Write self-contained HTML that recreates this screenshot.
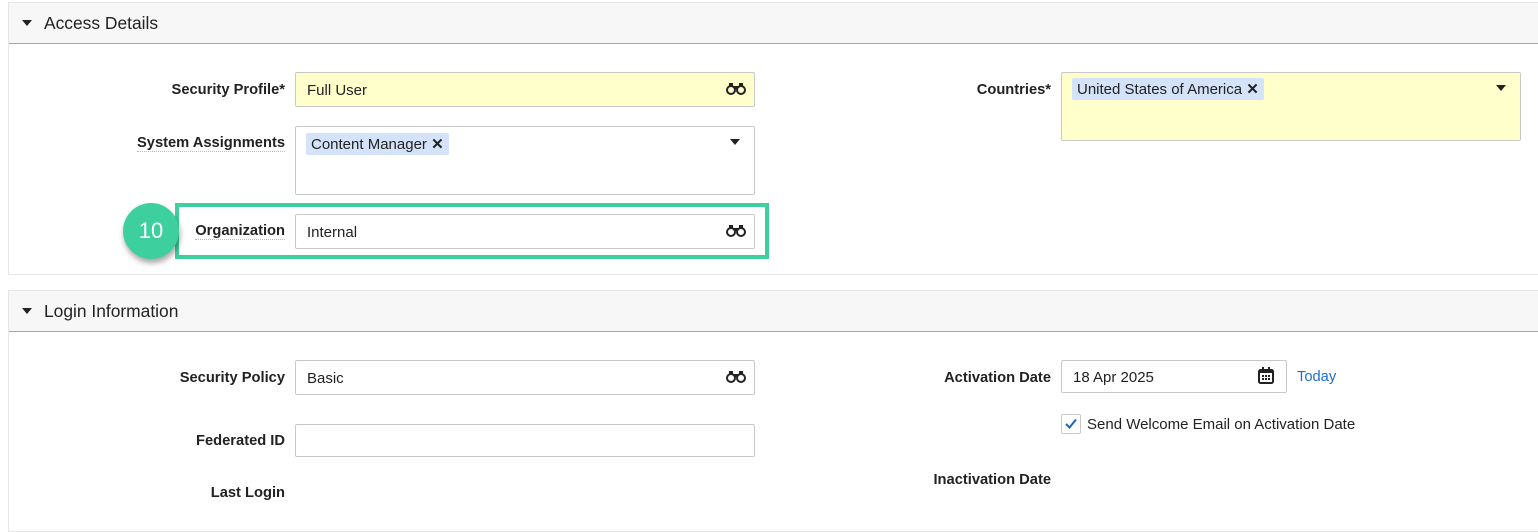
<!DOCTYPE html>
<html><head><style>
body{margin:0;width:1538px;height:520px;overflow:hidden;background:#fff;font-family:"Liberation Sans",Arial,sans-serif;color:#222;position:relative}
.a{position:absolute}
.panel{position:absolute;left:8px;right:-10px;border:1px solid #e6e6e6;background:#fff}
.hdr{position:absolute;left:0;right:0;top:0;height:40px;background:#f7f7f7;border-bottom:1px solid #e8963a}
.tri{position:absolute;left:13px;top:17px;width:0;height:0;border-left:5px solid transparent;border-right:5px solid transparent;border-top:6px solid #222}
.ttl{position:absolute;left:35px;top:10px;font-size:17.4px;color:#222}
.lbl{position:absolute;font-weight:bold;font-size:14.7px;text-align:right;color:#222}
.inp{position:absolute;border:1px solid #c8c8c8;border-radius:2px;background:#fff;font-size:15px;box-sizing:border-box}
.y{background:#ffffcc}
.chip{position:absolute;background:#d4e3fa;border-radius:2px;font-size:15px;padding:2px 5px;height:22px;box-sizing:border-box}
.dd{position:absolute;width:0;height:0;border-left:5px solid transparent;border-right:5px solid transparent;border-top:6px solid #222}
</style></head><body>
<div class="panel" style="top:2px;height:271px">
 <div class="hdr"><div class="tri"></div><div class="ttl">Access Details</div></div>
</div>
<div class="lbl" style="right:1253px;top:82px">Security Profile*</div>
<div class="inp y" style="left:295px;top:72px;width:460px;height:35px;padding:9px 11px">Full User</div>
<svg class="a" style="left:726px;top:83px" width="20" height="12" viewBox="0 0 20 12"><circle cx="5" cy="7" r="4" fill="none" stroke="#222" stroke-width="2"/><circle cx="15" cy="7" r="4" fill="none" stroke="#222" stroke-width="2"/><rect x="3" y="0" width="4" height="4" fill="#222"/><rect x="13" y="0" width="4" height="4" fill="#222"/><rect x="8" y="3" width="4" height="3" fill="#222"/></svg>
<div class="lbl" style="right:1253px;top:135px;border-bottom:1px dotted #bbb">System Assignments</div>
<div class="inp" style="left:295px;top:126px;width:460px;height:69px"></div>
<div class="chip" style="left:306px;top:133px">Content Manager <b>✕</b></div>
<div class="dd" style="left:730px;top:139px"></div>
<div class="a" style="left:175px;top:203px;width:586px;height:48px;border:4px solid #3ecf9e"></div>
<div class="a" style="left:123px;top:203px;width:56px;height:56px;border-radius:50%;background:#3ecf9e;box-shadow:1px 4px 6px rgba(0,0,0,.35);color:#fff;font-size:22px;text-align:center;line-height:56px">10</div>
<div class="lbl" style="right:1253px;top:223px;border-bottom:1px dotted #bbb">Organization</div>
<div class="inp" style="left:295px;top:214px;width:460px;height:35px;padding:9px 11px">Internal</div>
<svg class="a" style="left:726px;top:225px" width="20" height="12" viewBox="0 0 20 12"><circle cx="5" cy="7" r="4" fill="none" stroke="#222" stroke-width="2"/><circle cx="15" cy="7" r="4" fill="none" stroke="#222" stroke-width="2"/><rect x="3" y="0" width="4" height="4" fill="#222"/><rect x="13" y="0" width="4" height="4" fill="#222"/><rect x="8" y="3" width="4" height="3" fill="#222"/></svg>
<div class="lbl" style="right:487px;top:82px">Countries*</div>
<div class="inp y" style="left:1061px;top:72px;width:460px;height:69px"></div>
<div class="chip" style="left:1072px;top:78px">United States of America <b>✕</b></div>
<div class="dd" style="left:1496px;top:85px"></div>

<div class="panel" style="top:290px;height:240px">
 <div class="hdr"><div class="tri"></div><div class="ttl">Login Information</div></div>
</div>
<div class="lbl" style="right:1253px;top:370px">Security Policy</div>
<div class="inp" style="left:295px;top:360px;width:460px;height:35px;padding:9px 11px">Basic</div>
<svg class="a" style="left:726px;top:371px" width="20" height="12" viewBox="0 0 20 12"><circle cx="5" cy="7" r="4" fill="none" stroke="#222" stroke-width="2"/><circle cx="15" cy="7" r="4" fill="none" stroke="#222" stroke-width="2"/><rect x="3" y="0" width="4" height="4" fill="#222"/><rect x="13" y="0" width="4" height="4" fill="#222"/><rect x="8" y="3" width="4" height="3" fill="#222"/></svg>
<div class="lbl" style="right:1253px;top:433px">Federated ID</div>
<div class="inp" style="left:295px;top:424px;width:460px;height:33px"></div>
<div class="lbl" style="right:1253px;top:485px">Last Login</div>
<div class="lbl" style="right:487px;top:370px">Activation Date</div>
<div class="inp" style="left:1061px;top:360px;width:226px;height:33px;padding:8px 11px">18 Apr 2025</div>
<svg class="a" style="left:1258px;top:367px" width="16" height="17" viewBox="0 0 16 17"><rect x="1" y="3" width="14" height="13" rx="1.5" fill="none" stroke="#222" stroke-width="2"/><rect x="1" y="3" width="14" height="3" fill="#222"/><rect x="4" y="0" width="2" height="4" fill="#222"/><rect x="10" y="0" width="2" height="4" fill="#222"/><rect x="4" y="8" width="2" height="2" fill="#222"/><rect x="7" y="8" width="2" height="2" fill="#222"/><rect x="10" y="8" width="2" height="2" fill="#222"/><rect x="4" y="11" width="2" height="2" fill="#222"/><rect x="7" y="11" width="2" height="2" fill="#222"/><rect x="10" y="11" width="2" height="2" fill="#222"/></svg>
<div class="a" style="left:1297px;top:369px;font-size:14.7px;color:#1a6fd1">Today</div>
<div class="a" style="left:1061px;top:414px;width:18px;height:18px;border:1px solid #c8c8c8;border-radius:2px"></div>
<svg class="a" style="left:1065px;top:418px" width="12" height="11" viewBox="0 0 12 11"><path d="M1 6 L4.5 9.5 L11 1.5" fill="none" stroke="#1f63c6" stroke-width="2"/></svg>
<div class="a" style="left:1087px;top:416px;font-size:15px">Send Welcome Email on Activation Date</div>
<div class="lbl" style="right:487px;top:472px">Inactivation Date</div>
</body></html>
